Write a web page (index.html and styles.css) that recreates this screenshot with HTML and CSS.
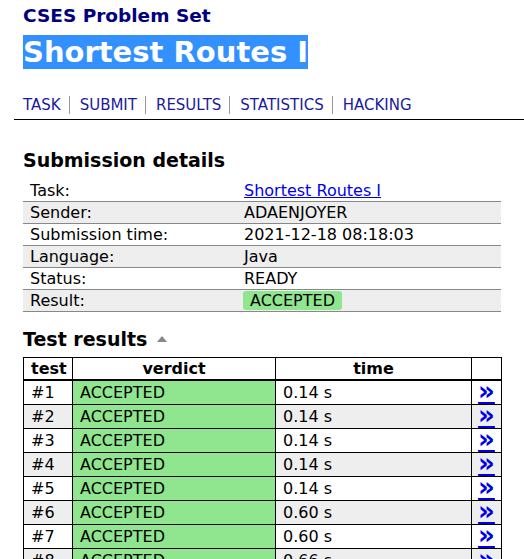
FILE: index.html
```html
<!DOCTYPE html>
<html>
<head>
<meta charset="utf-8">
<link rel="stylesheet" href="styles.css">
</head>
<body>
<div class="header">
  <div class="title-block">
    <div class="site">CSES Problem Set</div>
    <h1><span class="sel">Shortest Routes I</span></h1>
  </div>
  <ul class="nav">
    <li><a href="#">TASK</a></li>
    <li><a href="#">SUBMIT</a></li>
    <li><a href="#">RESULTS</a></li>
    <li><a href="#">STATISTICS</a></li>
    <li><a href="#">HACKING</a></li>
  </ul>
</div>
<div class="content">
  <h2>Submission details</h2>
  <table class="details">
    <tr><td class="lbl">Task:</td><td><a class="task-link" href="#">Shortest Routes I</a></td></tr>
    <tr><td class="lbl">Sender:</td><td>ADAENJOYER</td></tr>
    <tr><td class="lbl">Submission time:</td><td>2021-12-18 08:18:03</td></tr>
    <tr><td class="lbl">Language:</td><td>Java</td></tr>
    <tr><td class="lbl">Status:</td><td>READY</td></tr>
    <tr><td class="lbl">Result:</td><td><span class="badge">ACCEPTED</span></td></tr>
  </table>
  <h2 class="tests-h">Test results <span class="tri"></span></h2>
  <table class="tests">
    <tr class="head"><th class="c-test">test</th><th class="c-verdict">verdict</th><th class="c-time">time</th><th class="c-link"></th></tr>
    <tr><td>#1</td><td class="ok">ACCEPTED</td><td>0.14 s</td><td class="lk"><a href="#">&raquo;</a></td></tr>
    <tr><td>#2</td><td class="ok">ACCEPTED</td><td>0.14 s</td><td class="lk"><a href="#">&raquo;</a></td></tr>
    <tr><td>#3</td><td class="ok">ACCEPTED</td><td>0.14 s</td><td class="lk"><a href="#">&raquo;</a></td></tr>
    <tr><td>#4</td><td class="ok">ACCEPTED</td><td>0.14 s</td><td class="lk"><a href="#">&raquo;</a></td></tr>
    <tr><td>#5</td><td class="ok">ACCEPTED</td><td>0.14 s</td><td class="lk"><a href="#">&raquo;</a></td></tr>
    <tr><td>#6</td><td class="ok">ACCEPTED</td><td>0.60 s</td><td class="lk"><a href="#">&raquo;</a></td></tr>
    <tr><td>#7</td><td class="ok">ACCEPTED</td><td>0.60 s</td><td class="lk"><a href="#">&raquo;</a></td></tr>
    <tr><td>#8</td><td class="ok">ACCEPTED</td><td>0.66 s</td><td class="lk"><a href="#">&raquo;</a></td></tr>
    <tr><td>#9</td><td class="ok">ACCEPTED</td><td>0.66 s</td><td class="lk"><a href="#">&raquo;</a></td></tr>
  </table>
</div>
</body>
</html>
```
FILE: styles.css
```css
html, body {
  margin: 0;
  padding: 0;
  background: #fff;
}
body {
  font-family: "DejaVu Sans", Verdana, sans-serif;
  font-size: 16px;
  color: #000;
  overflow: hidden;
}
.header {
  margin-left: 14px;
  border-bottom: 1px solid #000;
  padding: 5px 0 5px 9px;
}
.site {
  font-size: 18.5px;
  font-weight: bold;
  color: #000080;
  line-height: 22px;
}
h1 {
  margin: 8px 0 0 0;
  font-size: 29px;
  line-height: 35px;
  font-weight: bold;
}
.sel {
  background: #3390ff;
  color: #fff;
}
.nav {
  list-style: none;
  margin: 26px 0 0 0;
  padding: 0;
  display: flex;
  font-size: 15px;
}
.nav li {
  line-height: 18px;
  padding: 0 8px 0 10px;
  border-left: 1px solid #999;
}
.nav li:first-child {
  padding-left: 0;
  border-left: none;
}
.nav a {
  color: #1a1a9c;
  text-decoration: none;
}
.content {
  padding: 0 23px;
}
h2 {
  font-size: 19px;
  font-weight: bold;
  margin: 29px 0 9px 0;
  line-height: 22px;
}
.details {
  width: 100%;
  border-collapse: collapse;
}
.details td {
  padding: 0 7px;
  height: 21px;
  line-height: 21px;
  border-bottom: 1px solid #888;
}
.details tr:nth-child(even) td {
  background: #eee;
}
.details .lbl {
  width: 200px;
}
.task-link {
  color: #0000ee;
}
.badge {
  display: inline-block;
  line-height: 19px;
  background: #8fe68f;
  border-radius: 3px;
  padding: 0 7px;
  margin-left: -1px;
}
.tests-h {
  margin: 16px 0 7px 0;
}
.tri {
  display: inline-block;
  width: 0;
  height: 0;
  border-left: 5px solid transparent;
  border-right: 5px solid transparent;
  border-bottom: 6px solid #888;
  vertical-align: 4px;
  margin-left: 3px;
}
.tests {
  width: 100%;
  table-layout: fixed;
  border-collapse: collapse;
  border: 1px solid #000;
}
.tests th, .tests td {
  border: 1px solid #000;
  padding: 0 7px;
  line-height: 23px;
  text-align: left;
  white-space: nowrap;
}
.tests th {
  text-align: center;
  line-height: 21px;
  border-bottom: 2px solid #000;
}
.tests tr:nth-child(odd) td {
  background: #eee;
}
.tests tr td.ok {
  background: #8fe68f;
}
.tests th.c-test { width: 34px; }
.tests th.c-verdict { width: 188px; }
.tests th.c-time { width: 181px; }
.tests th.c-link { width: 29px; padding: 0; }
.tests td.lk {
  text-align: center;
  padding: 0;
}
.lk a {
  color: #0000ee;
  font-weight: bold;
  font-size: 26px;
  height: 22px;
  line-height: 20px;
  display: inline-block;
  vertical-align: top;
}
```
